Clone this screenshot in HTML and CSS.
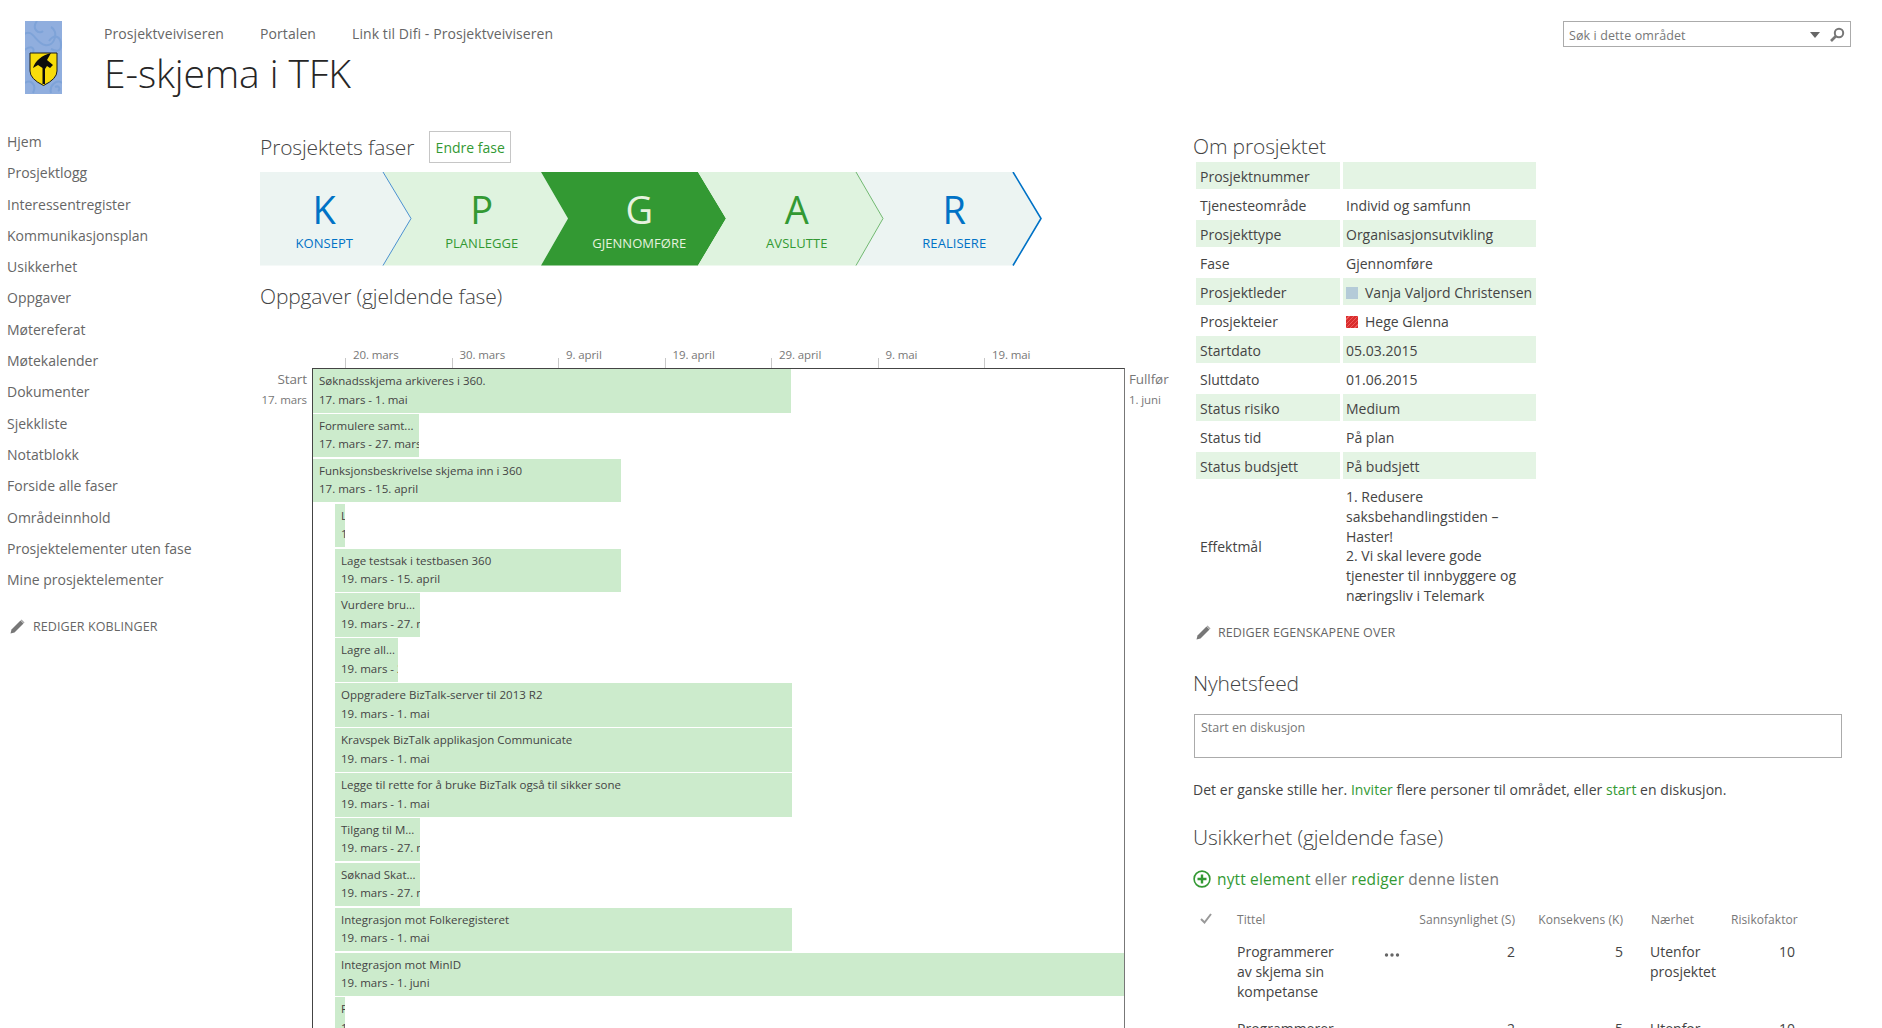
FILE: index.html
```html
<!DOCTYPE html>
<html lang="no">
<head>
<meta charset="utf-8">
<title>E-skjema i TFK</title>
<link rel="stylesheet" href="styles.css">
</head>
<body>
<header class="top">
  <svg class="logo" width="37" height="73" viewBox="0 0 37 73">
    <rect width="37" height="73" fill="#90aede"/>
    <g fill="none" stroke="#7ea3d8" stroke-width="2">
      <path d="M-2 14C8 6 10 22 20 24S34 10 26 6"/>
      <path d="M12 0C6 8 14 14 18 10"/>
      <path d="M24 20C30 12 36 16 36 24S30 30 26 28"/>
      <path d="M-2 30C6 24 10 26 8 32"/>
      <path d="M0 62C6 58 12 64 8 72"/>
      <path d="M26 72C24 64 32 58 37 62"/>
      <path d="M30 66C34 64 36 68 33 70"/>
    </g>
    <path d="M5 32H32V50Q32 58 18.500 64.500Q5 58 5 50Z" fill="#f8dc0a" stroke="#1a1a1a" stroke-width="1"/>
    <path d="M8 47C10 40 17 34 26 32L22 39L28 44L25 47L22 45L20 48L20 63H17.500L17.500 47L13 44Z" fill="#0c0c0c"/>
  </svg>
  <div class="site-head">
    <nav class="top-nav">
      <a>Prosjektveiviseren</a>
      <a>Portalen</a>
      <a>Link til Difi - Prosjektveiviseren</a>
    </nav>
    <h1 class="site-title">E-skjema i TFK</h1>
  </div>
  <div class="search">
    <span class="search-text">Søk i dette området</span>
    <svg class="search-caret" width="10" height="6" viewBox="0 0 10 6"><path d="M0 0H10L5 6Z" fill="#666"/></svg>
    <svg class="search-icon" width="16" height="16" viewBox="0 0 16 16"><circle cx="10" cy="6" r="4.200" fill="none" stroke="#777" stroke-width="2"/><path d="M7 9L2 14" stroke="#777" stroke-width="2.600"/></svg>
  </div>
</header>

<div class="page">
  <aside class="side">
    <nav class="side-nav">
      <a>Hjem</a>
      <a>Prosjektlogg</a>
      <a>Interessentregister</a>
      <a>Kommunikasjonsplan</a>
      <a>Usikkerhet</a>
      <a>Oppgaver</a>
      <a>Møtereferat</a>
      <a>Møtekalender</a>
      <a>Dokumenter</a>
      <a>Sjekkliste</a>
      <a>Notatblokk</a>
      <a>Forside alle faser</a>
      <a>Områdeinnhold</a>
      <a>Prosjektelementer uten fase</a>
      <a>Mine prosjektelementer</a>
    </nav>
    <div class="edit-link side-edit">
      <svg width="15" height="15" viewBox="0 0 15 15"><path d="M0.500 14.500L1.500 10.500L10.500 1.500L13.500 4.500L4.500 13.500Z" fill="#777"/><path d="M11.500 0.500L14.500 3.500L13.800 4.200L10.800 1.200Z" fill="#999"/></svg>
      <span>Rediger koblinger</span>
    </div>
  </aside>

  <main class="left">
    <div class="phase-head">
      <h2 class="heading">Prosjektets faser</h2>
      <a class="phase-button">Endre fase</a>
    </div>
    <div class="phases">
      <svg class="phases-bg" width="784" height="94" viewBox="0 0 784 94">
        <path d="M0 0H123L151 46.500L123 93.500H0Z" fill="#ecf4f2"/>
        <path d="M123 0H281L308 46.500L281 93.500H123L151 46.500Z" fill="#dff3df"/>
        <path d="M281 0H438L466 46.500L438 93.500H281L308 46.500Z" fill="#339933"/>
        <path d="M438 0H596L623 46.500L596 93.500H438L466 46.500Z" fill="#dff3df"/>
        <path d="M596 0H753L781 46.500L753 93.500H596L623 46.500Z" fill="#ecf4f2"/>
        <path d="M123 0L151 46.500L123 93.500" fill="none" stroke="#4a90d0" stroke-width="1"/>
        <path d="M596 0L623 46.500L596 93.500" fill="none" stroke="#70b870" stroke-width="1"/>
        <path d="M753 0L781 46.500L753 93.500" fill="none" stroke="#0072c6" stroke-width="1.600"/>
      </svg>
      <div class="phase phase-blue"><span class="phase-letter">K</span><span class="phase-name">Konsept</span></div>
      <div class="phase phase-green"><span class="phase-letter">P</span><span class="phase-name">Planlegge</span></div>
      <div class="phase phase-active"><span class="phase-letter">G</span><span class="phase-name">Gjennomføre</span></div>
      <div class="phase phase-green"><span class="phase-letter">A</span><span class="phase-name">Avslutte</span></div>
      <div class="phase phase-blue"><span class="phase-letter">R</span><span class="phase-name">Realisere</span></div>
    </div>
    <h2 class="heading tasks-heading">Oppgaver (gjeldende fase)</h2>
    <div class="gantt">
      <div class="axis">
        <span class="tick">20. mars</span>
        <span class="tick">30. mars</span>
        <span class="tick">9. april</span>
        <span class="tick">19. april</span>
        <span class="tick">29. april</span>
        <span class="tick">9. mai</span>
        <span class="tick">19. mai</span>
      </div>
      <div class="gantt-start"><div class="edge-title">Start</div><div class="edge-date">17. mars</div></div>
      <div class="gantt-box">
        <div class="bar" style="margin-left:0;width:478px"><div>Søknadsskjema arkiveres i 360.</div><div>17. mars - 1. mai</div></div>
        <div class="bar" style="margin-left:0;width:106px"><div>Formulere samt...</div><div>17. mars - 27. mars</div></div>
        <div class="bar" style="margin-left:0;width:308px"><div>Funksjonsbeskrivelse skjema inn i 360</div><div>17. mars - 15. april</div></div>
        <div class="bar" style="margin-left:22px;width:10px"><div>Lage...</div><div>19. mars - 27. mars</div></div>
        <div class="bar" style="margin-left:22px;width:286px"><div>Lage testsak i testbasen 360</div><div>19. mars - 15. april</div></div>
        <div class="bar" style="margin-left:22px;width:85px"><div>Vurdere bru...</div><div>19. mars - 27. mars</div></div>
        <div class="bar" style="margin-left:22px;width:63px"><div>Lagre all...</div><div>19. mars - 27. mars</div></div>
        <div class="bar" style="margin-left:22px;width:457px"><div>Oppgradere BizTalk-server til 2013 R2</div><div>19. mars - 1. mai</div></div>
        <div class="bar" style="margin-left:22px;width:457px"><div>Kravspek BizTalk applikasjon Communicate</div><div>19. mars - 1. mai</div></div>
        <div class="bar" style="margin-left:22px;width:457px"><div>Legge til rette for å bruke BizTalk også til sikker sone</div><div>19. mars - 1. mai</div></div>
        <div class="bar" style="margin-left:22px;width:85px"><div>Tilgang til M...</div><div>19. mars - 27. mars</div></div>
        <div class="bar" style="margin-left:22px;width:85px"><div>Søknad Skat...</div><div>19. mars - 27. mars</div></div>
        <div class="bar" style="margin-left:22px;width:457px"><div>Integrasjon mot Folkeregisteret</div><div>19. mars - 1. mai</div></div>
        <div class="bar" style="margin-left:22px;width:789px"><div>Integrasjon mot MinID</div><div>19. mars - 1. juni</div></div>
        <div class="bar" style="margin-left:22px;width:10px"><div>Forberede...</div><div>19. mars - 27. mars</div></div>
      </div>
      <div class="gantt-end"><div class="edge-title">Fullfør</div><div class="edge-date">1. juni</div></div>
    </div>
  </main>

  <section class="right">
    <h2 class="heading about-heading">Om prosjektet</h2>
    <table class="props">
      <tr class="odd"><td class="prop-k">Prosjektnummer</td><td class="prop-v"></td></tr>
      <tr><td class="prop-k">Tjenesteområde</td><td class="prop-v">Individ og samfunn</td></tr>
      <tr class="odd"><td class="prop-k">Prosjekttype</td><td class="prop-v">Organisasjonsutvikling</td></tr>
      <tr><td class="prop-k">Fase</td><td class="prop-v">Gjennomføre</td></tr>
      <tr class="odd"><td class="prop-k">Prosjektleder</td><td class="prop-v"><span class="presence presence-blue"></span>Vanja Valjord Christensen</td></tr>
      <tr><td class="prop-k">Prosjekteier</td><td class="prop-v"><span class="presence presence-red"></span>Hege Glenna</td></tr>
      <tr class="odd"><td class="prop-k">Startdato</td><td class="prop-v">05.03.2015</td></tr>
      <tr><td class="prop-k">Sluttdato</td><td class="prop-v">01.06.2015</td></tr>
      <tr class="odd"><td class="prop-k">Status risiko</td><td class="prop-v">Medium</td></tr>
      <tr><td class="prop-k">Status tid</td><td class="prop-v">På plan</td></tr>
      <tr class="odd"><td class="prop-k">Status budsjett</td><td class="prop-v">På budsjett</td></tr>
      <tr><td class="prop-k">Effektmål</td><td class="prop-v prop-long">1. Redusere saksbehandlingstiden – Haster!<br>2. Vi skal levere gode tjenester til innbyggere og næringsliv i Telemark</td></tr>
    </table>
    <div class="edit-link props-edit">
      <svg width="15" height="15" viewBox="0 0 15 15"><path d="M0.500 14.500L1.500 10.500L10.500 1.500L13.500 4.500L4.500 13.500Z" fill="#777"/><path d="M11.500 0.500L14.500 3.500L13.800 4.200L10.800 1.200Z" fill="#999"/></svg>
      <span>Rediger egenskapene over</span>
    </div>
    <h2 class="heading feed-heading">Nyhetsfeed</h2>
    <div class="feed-box">Start en diskusjon</div>
    <p class="feed-note">Det er ganske stille her. <a class="link">Inviter</a> flere personer til området, eller <a class="link">start</a> en diskusjon.</p>
    <h2 class="heading risk-heading">Usikkerhet (gjeldende fase)</h2>
    <div class="new-item">
      <svg width="18" height="18" viewBox="0 0 18 18"><circle cx="9" cy="9" r="7.900" fill="#fff" stroke="#339933" stroke-width="1.600"/><path d="M9 4.500V13.500M4.500 9H13.500" stroke="#339933" stroke-width="2.400"/></svg>
      <span><a class="link">nytt element</a> eller <a class="link">rediger</a> denne listen</span>
    </div>
    <table class="risks">
      <thead>
        <tr>
          <th class="col-check"><svg width="12" height="11" viewBox="0 0 12 11"><path d="M1 6L4.500 9.500L11 1" fill="none" stroke="#999" stroke-width="2"/></svg></th>
          <th class="col-title">Tittel</th>
          <th class="col-more"></th>
          <th class="col-num">Sannsynlighet (S)</th>
          <th class="col-num col-k">Konsekvens (K)</th>
          <th class="col-near">Nærhet</th>
          <th class="col-factor">Risikofaktor</th>
        </tr>
      </thead>
      <tbody>
        <tr>
          <td></td>
          <td class="risk-title">Programmerer av skjema sin kompetanse</td>
          <td class="risk-more"><svg width="16" height="4" viewBox="0 0 16 4"><circle cx="2.500" cy="2" r="1.700" fill="#666"/><circle cx="8" cy="2" r="1.700" fill="#666"/><circle cx="13.500" cy="2" r="1.700" fill="#666"/></svg></td>
          <td class="num">2</td>
          <td class="num">5</td>
          <td class="risk-near">Utenfor prosjektet</td>
          <td class="num risk-factor">10</td>
        </tr>
        <tr>
          <td></td>
          <td class="risk-title">Programmerer av skjema sin kompetanse</td>
          <td class="risk-more"><svg width="16" height="4" viewBox="0 0 16 4"><circle cx="2.500" cy="2" r="1.700" fill="#666"/><circle cx="8" cy="2" r="1.700" fill="#666"/><circle cx="13.500" cy="2" r="1.700" fill="#666"/></svg></td>
          <td class="num">2</td>
          <td class="num">5</td>
          <td class="risk-near">Utenfor prosjektet</td>
          <td class="num risk-factor">10</td>
        </tr>
      </tbody>
    </table>
  </section>
</div>
</body>
</html>
```
FILE: styles.css
```css
html, body {
  margin: 0;
  height: 1028px;
  overflow: hidden;
  background: #fff;
}
body {
  font-family: "Open Sans", "Noto Sans", sans-serif;
  font-size: 14px;
  color: #444;
}
h1, h2, p { margin: 0; }

.top {
  display: flex;
  height: 126px;
  padding: 21px 31px 0 25px;
  box-sizing: border-box;
}
.logo { flex: none; margin-right: 42px; }
.site-head { flex: 1; }
.top-nav {
  display: flex;
  gap: 36px;
  margin-top: 3px;
  line-height: 20px;
  font-size: 14px;
  letter-spacing: 0.08px;
  color: #666;
}
.site-title {
  margin-top: 4px;
  font-size: 39px;
  font-weight: 300;
  line-height: 50px;
  color: #262626;
  letter-spacing: -0.1px;
}
.search {
  flex: none;
  display: flex;
  align-items: center;
  width: 288px;
  height: 26px;
  box-sizing: border-box;
  border: 1px solid #ababab;
  padding: 2px 5px 0;
  font-size: 12.500px;
  letter-spacing: 0.1px;
  color: #777;
}
.search-text { flex: 1; }
.search-caret { margin-right: 9px; }

.page { display: flex; align-items: flex-start; }
.side { flex: none; width: 253px; padding-left: 7px; }
.side-nav { display: flex; flex-direction: column; }
.side-nav a {
  line-height: 31.300px;
  font-size: 14px;
  color: #666;
}
.edit-link {
  display: flex;
  align-items: center;
  font-size: 12.500px;
  letter-spacing: 0.1px;
  text-transform: uppercase;
  color: #666;
}
.side-edit { margin: 23px 0 0 3px; gap: 8px; }

.heading {
  font-size: 21px;
  font-weight: 300;
  line-height: 28px;
  letter-spacing: -0.15px;
  color: #444;
}
.left { flex: none; width: 933px; padding-top: 5px; }
.phase-head { display: flex; align-items: center; height: 32px; gap: 15px; }
.phase-button {
  display: block;
  box-sizing: border-box;
  width: 82px;
  height: 32px;
  border: 1px solid #c6c6c6;
  line-height: 31px;
  text-align: center;
  font-size: 14px;
  color: #339933;
}
.phases { position: relative; display: flex; height: 94px; margin-top: 9px; }
.phases-bg { position: absolute; left: 0; top: 0; }
.phase {
  position: relative;
  flex: none;
  width: 157.500px;
  box-sizing: border-box;
  padding-right: 29px;
  display: flex;
  flex-direction: column;
  align-items: center;
}
.phase-letter { margin-top: 12px; font-size: 38px; line-height: 50px; }
.phase-name { font-size: 13px; line-height: 18px; letter-spacing: 0.05px; text-transform: uppercase; }
.phase-blue { color: #0072c6; }
.phase-green { color: #339933; }
.phase-active { color: #e6f2df; }
.tasks-heading { margin-top: 16px; }

.gantt {
  display: grid;
  grid-template-columns: 52px 813px 60px;
  margin-top: 35px;
}
.axis {
  grid-column: 2;
  grid-row: 1;
  display: flex;
  height: 23px;
  padding-left: 33px;
}
.tick {
  flex: none;
  width: 106.500px;
  box-sizing: border-box;
  padding-left: 8px;
  font-size: 11.500px;
  line-height: 20px;
  letter-spacing: -0.1px;
  color: #777;
  background: linear-gradient(#c8c8c8, #c8c8c8) left bottom / 1px 10px no-repeat;
}
.gantt-start { grid-column: 1; grid-row: 2; padding: 1px 5px 0 0; text-align: right; }
.gantt-box { grid-column: 2; grid-row: 2; }
.gantt-end { grid-column: 3; grid-row: 2; padding: 1px 0 0 4px; }
.edge-title { font-size: 13.500px; line-height: 20px; letter-spacing: -0.1px; color: #777; }
.edge-date { font-size: 11.500px; line-height: 21px; letter-spacing: -0.1px; color: #777; }
.gantt-box {
  box-sizing: border-box;
  height: 700px;
  border: 1px solid #444;
  border-right-color: #777;
}
.bar {
  box-sizing: border-box;
  height: 43.500px;
  margin-bottom: 1.400px;
  padding: 3px 0 0 6px;
  overflow: hidden;
  white-space: nowrap;
  background: #ccebcc;
  font-size: 11.500px;
  line-height: 18.500px;
  color: #444;
}

.right { flex: none; width: 650px; padding-top: 6px; }
.props {
  border-collapse: separate;
  border-spacing: 3px 2px;
  table-layout: fixed;
  width: 346px;
  font-size: 14px;
  color: #444;
}
.props td { padding: 1px 3px 0; height: 27px; box-sizing: border-box; }
.prop-k { width: 144px; padding-left: 4px !important; }
.prop-v { width: 193px; }
.odd td { background: #e4f4e4; }
.prop-long { line-height: 19.800px; padding-top: 6px !important; padding-bottom: 6px !important; }
.presence { display: inline-block; width: 12px; height: 12px; margin-right: 7px; vertical-align: -1px; }
.presence-blue { background: #b4cbd8; }
.presence-red { background: repeating-linear-gradient(135deg, #d92d2d 0 2px, #ee5a5a 2px 3px); }
.props-edit { margin: 10px 0 0 3px; gap: 7px; }
.feed-heading { margin-top: 28px; }
.feed-box {
  box-sizing: border-box;
  width: 648px;
  height: 44px;
  margin: 17px 0 0 1px;
  border: 1px solid #ababab;
  padding: 4px 6px;
  font-size: 12.500px;
  line-height: 18px;
  color: #777;
}
.feed-note { margin-top: 22px; line-height: 20px; letter-spacing: 0.05px; color: #444; }
.link { color: #339933; }
.risk-heading { margin-top: 23px; }
.new-item {
  display: flex;
  align-items: center;
  gap: 6px;
  margin-top: 16px;
  font-size: 15.500px;
  line-height: 24px;
  letter-spacing: 0.15px;
  color: #777;
}
.risks {
  border-collapse: collapse;
  table-layout: fixed;
  width: 604px;
  margin-top: 16px;
  font-size: 14px;
  color: #444;
}
.risks th {
  height: 26px;
  padding: 0;
  font-size: 12px;
  font-weight: 400;
  letter-spacing: 0.05px;
  color: #777;
  text-align: left;
}
.risks td { padding: 9px 0 8px; line-height: 20px; vertical-align: top; }
.col-check { width: 44px; padding-left: 7px !important; box-sizing: border-box; }
.col-title { width: 145px; }
.col-more { width: 32px; }
.col-num { width: 101px; text-align: right !important; }
.col-k { width: 108px; }
.col-near { width: 108px; padding-left: 28px !important; box-sizing: border-box; }
.col-factor { width: 66px; }
.risks td.risk-title { padding-right: 30px; }
.risks td.risk-more { padding-left: 2px; }
.risks td.risk-near { padding-left: 27px; }
.risks td.risk-factor { padding-right: 2px; }
.num { text-align: right; }
```
